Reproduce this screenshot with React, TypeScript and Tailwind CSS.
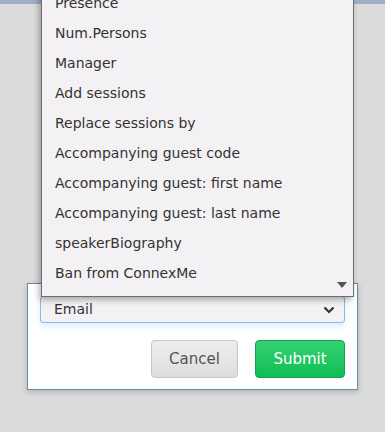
import React from 'react';

const options = [
  'Presence',
  'Num.Persons',
  'Manager',
  'Add sessions',
  'Replace sessions by',
  'Accompanying guest code',
  'Accompanying guest: first name',
  'Accompanying guest: last name',
  'speakerBiography',
  'Ban from ConnexMe',
];

export default function App() {
  return (
    <div
      className="relative h-[432px] w-[385px] overflow-hidden bg-[#dbdbdb]"
      style={{ fontFamily: '"DejaVu Sans", Verdana, sans-serif' }}
    >
      <div className="h-[4px] bg-[#9eaec6]" />

      {/* Dialog */}
      <div className="ml-[27px] mt-[279px] w-[331px] border border-[#5f8fae] bg-white px-[12px] pb-[11px] pt-[12px] shadow-[0_2px_6px_rgba(0,0,0,0.2)]">
        <div className="flex h-[27px] items-center justify-between rounded-[3px] border border-[#86bbea] bg-[#f3f1f4] pl-[13px] pr-[9px] text-[14px] text-[#333] shadow-[0_3px_6px_rgba(120,180,235,0.25)]">
          <span>Email</span>
          <svg width="12" height="8" viewBox="0 0 12 8">
            <path d="M1.5 1.5 L6 6 L10.5 1.5" fill="none" stroke="#333" strokeWidth="2.2" />
          </svg>
        </div>
        <div className="mt-[17px] flex justify-end gap-[17px]">
          <button className="h-[38px] w-[87px] rounded-[4px] border border-[#c6c6c6] bg-gradient-to-b from-[#eeeeee] to-[#dedede] text-[15px] text-[#555]">
            Cancel
          </button>
          <button className="h-[38px] w-[90px] rounded-[4px] border border-[#17a04c] bg-gradient-to-b from-[#33d072] to-[#0cbe55] text-[15px] text-white">
            Submit
          </button>
        </div>
      </div>

      {/* Open dropdown list */}
      <div className="absolute left-[41px] top-[-19px] w-[313px] border border-[#6e6e6e] bg-[#f3f1f4] pb-[8px] pt-[6px] shadow-[-2px_3px_6px_rgba(0,0,0,0.3)]">
        {options.map((o) => (
          <div key={o} className="flex h-[30px] items-center pl-[13px] text-[14px] text-[#333]">
            {o}
          </div>
        ))}
        <svg className="absolute bottom-[8px] right-[6px]" width="10" height="6" viewBox="0 0 10 6">
          <path d="M0 0 L10 0 L5 6 Z" fill="#555" />
        </svg>
      </div>
    </div>
  );
}
